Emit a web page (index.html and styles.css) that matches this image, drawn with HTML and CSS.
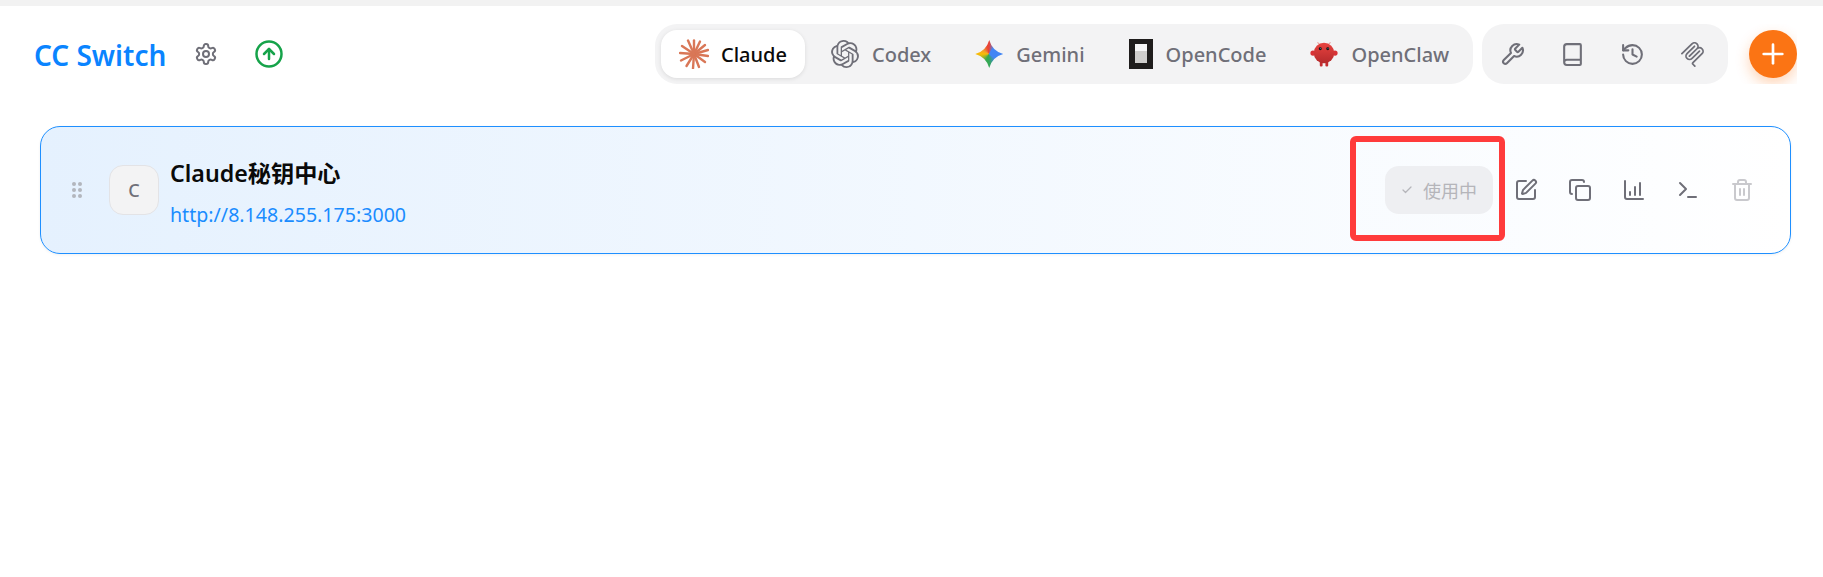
FILE: index.html
```html
<!DOCTYPE html>
<html lang="zh-CN">
<head>
<meta charset="utf-8">
<title>CC Switch</title>
<link rel="stylesheet" href="styles.css">
</head>
<body>
<div class="topstrip"></div>
<header class="header">
  <div class="brand">
    <h1 class="logo">CC Switch</h1>
    <button class="icon-btn gear" aria-label="设置">
      <svg class="ic ic-24" viewBox="0 0 24 24"><path d="M12.22 2h-.44a2 2 0 0 0-2 2v.18a2 2 0 0 1-1 1.73l-.43.25a2 2 0 0 1-2 0l-.15-.08a2 2 0 0 0-2.73.73l-.22.38a2 2 0 0 0 .73 2.73l.15.1a2 2 0 0 1 1 1.72v.51a2 2 0 0 1-1 1.74l-.15.09a2 2 0 0 0-.73 2.73l.22.38a2 2 0 0 0 2.73.73l.15-.08a2 2 0 0 1 2 0l.43.25a2 2 0 0 1 1 1.73V20a2 2 0 0 0 2 2h.44a2 2 0 0 0 2-2v-.18a2 2 0 0 1 1-1.73l.43-.25a2 2 0 0 1 2 0l.15.08a2 2 0 0 0 2.73-.73l.22-.39a2 2 0 0 0-.73-2.73l-.15-.08a2 2 0 0 1-1-1.74v-.5a2 2 0 0 1 1-1.74l.15-.09a2 2 0 0 0 .73-2.73l-.22-.38a2 2 0 0 0-2.73-.73l-.15.08a2 2 0 0 1-2 0l-.43-.25a2 2 0 0 1-1-1.73V4a2 2 0 0 0-2-2z"/><circle cx="12" cy="12" r="3"/></svg>
    </button>
    <button class="icon-btn update" aria-label="更新">
      <svg class="ic ic-30" viewBox="0 0 24 24"><circle cx="12" cy="12" r="10"/><path d="m16 12-4-4-4 4"/><path d="M12 16V8"/></svg>
    </button>
  </div>
  <div class="controls">
    <nav class="pill switcher">
      <button class="tab active">
        <svg class="app-ic claude-ic" viewBox="0 0 30 30"><g class="rays"><path d="M15 15 15 1.500"/><path d="M15 15 21 2.500"/><path d="M15 15 26 6"/><path d="M15 15 29 11"/><path d="M15 15 29 17"/><path d="M15 15 26 23"/><path d="M15 15 20 28"/><path d="M15 15 14 29.500"/><path d="M15 15 7.500 27"/><path d="M15 15 2 21.500"/><path d="M15 15 1 14"/><path d="M15 15 3 7"/><path d="M15 15 9 1.500"/></g></svg>
        <span>Claude</span>
      </button>
      <button class="tab">
        <svg class="app-ic" viewBox="0 0 24 24"><path class="openai" d="M22.2819 9.8211a5.9847 5.9847 0 0 0-.5157-4.9108 6.0462 6.0462 0 0 0-6.5098-2.9A6.0651 6.0651 0 0 0 4.9807 4.1818a5.9847 5.9847 0 0 0-3.9977 2.9 6.0462 6.0462 0 0 0 .7427 7.0966 5.98 5.98 0 0 0 .511 4.9107 6.051 6.051 0 0 0 6.5146 2.9001A5.9847 5.9847 0 0 0 13.2599 24a6.0557 6.0557 0 0 0 5.7718-4.2058 5.9894 5.9894 0 0 0 3.9977-2.9001 6.0557 6.0557 0 0 0-.7475-7.0729zm-9.022 12.6081a4.4755 4.4755 0 0 1-2.8764-1.0408l.1419-.0804 4.7783-2.7582a.7948.7948 0 0 0 .3927-.6813v-6.7369l2.02 1.1686a.071.071 0 0 1 .038.052v5.5826a4.504 4.504 0 0 1-4.4945 4.4944zm-9.6607-4.1254a4.4708 4.4708 0 0 1-.5346-3.0137l.142.0852 4.783 2.7582a.7712.7712 0 0 0 .7806 0l5.8428-3.3685v2.3324a.0804.0804 0 0 1-.0332.0615L9.74 19.9502a4.4992 4.4992 0 0 1-6.1408-1.6464zM2.3408 7.8956a4.485 4.485 0 0 1 2.3655-1.9728V11.6a.7664.7664 0 0 0 .3879.6765l5.8144 3.3543-2.0201 1.1685a.0757.0757 0 0 1-.071 0l-4.8303-2.7865A4.504 4.504 0 0 1 2.3408 7.872zm16.5963 3.8558L13.1038 8.364 15.1192 7.2a.0757.0757 0 0 1 .071 0l4.8303 2.7913a4.4944 4.4944 0 0 1-.6765 8.1042v-5.6772a.79.79 0 0 0-.407-.667zm2.0107-3.0231l-.142-.0852-4.7735-2.7818a.7759.7759 0 0 0-.7854 0L9.409 9.2297V6.8974a.0662.0662 0 0 1 .0284-.0615l4.8303-2.7866a4.4992 4.4992 0 0 1 6.6802 4.66zM8.3065 12.863l-2.02-1.1638a.0804.0804 0 0 1-.038-.0567V6.0742a4.4992 4.4992 0 0 1 7.3757-3.4537l-.142.0805L8.704 5.459a.7948.7948 0 0 0-.3927.6813zm1.0976-2.3654l2.602-1.4998 2.6069 1.4998v2.9994l-2.5974 1.4997-2.6067-1.4997Z"/></svg>
        <span>Codex</span>
      </button>
      <button class="tab">
        <span class="gemini"></span>
        <span>Gemini</span>
      </button>
      <button class="tab">
        <span class="opencode"><span class="opencode-inner"></span></span>
        <span>OpenCode</span>
      </button>
      <button class="tab">
        <svg class="app-ic" viewBox="0 0 30 30"><defs><linearGradient id="claw" x1="0" y1="0" x2="0" y2="1"><stop offset="0" stop-color="#e8433f"/><stop offset="1" stop-color="#b52a2c"/></linearGradient></defs><path class="antenna" d="M10.500 5 8 2.500M19.500 5 22 2.500"/><ellipse cx="3.200" cy="14" rx="2.800" ry="2.800" fill="#d93236"/><ellipse cx="26.800" cy="14" rx="2.800" ry="2.800" fill="#d93236"/><rect x="10.500" y="23" width="3" height="5.500" rx="1.200" fill="#c42d30"/><rect x="16.500" y="23" width="3" height="5.500" rx="1.200" fill="#c42d30"/><circle cx="15" cy="14" r="11" fill="url(#claw)"/><circle cx="11" cy="9.500" r="1.600" fill="#101418"/><circle cx="19" cy="9.500" r="1.600" fill="#101418"/><circle cx="11.300" cy="9" r=".5" fill="#7fe0e0"/><circle cx="19.300" cy="9" r=".5" fill="#7fe0e0"/></svg>
        <span>OpenClaw</span>
      </button>
    </nav>
    <div class="pill tools">
      <button class="tool" aria-label="工具"><svg class="ic ic-24" viewBox="0 0 24 24"><path d="M14.700 6.300a1 1 0 0 0 0 1.400l1.600 1.600a1 1 0 0 0 1.400 0l3.770-3.770a6 6 0 0 1-7.940 7.940l-6.910 6.910a2.120 2.120 0 0 1-3-3l6.910-6.910a6 6 0 0 1 7.940-7.940l-3.760 3.760z"/></svg></button>
      <button class="tool" aria-label="文档"><svg class="ic ic-24" viewBox="0 0 24 24"><path d="M4 19.500v-15A2.500 2.500 0 0 1 6.500 2H19a1 1 0 0 1 1 1v18a1 1 0 0 1-1 1H6.500a1 1 0 0 1 0-5H20"/></svg></button>
      <button class="tool" aria-label="历史"><svg class="ic ic-24" viewBox="0 0 24 24"><path d="M3 12a9 9 0 1 0 9-9 9.750 9.750 0 0 0-6.740 2.740L3 8"/><path d="M3 3v5h5"/><path d="M12 7v5l4 2"/></svg></button>
      <button class="tool" aria-label="MCP"><svg class="ic-fill ic-24" viewBox="0 0 24 24"><path d="M15.688 2.343a2.588 2.588 0 00-3.61 0l-9.626 9.44a.863.863 0 01-1.203 0 .823.823 0 010-1.18l9.626-9.44a4.313 4.313 0 016.016 0 4.116 4.116 0 011.204 3.54 4.3 4.3 0 013.609 1.18l.05.05a4.115 4.115 0 010 5.9l-8.706 8.537a.274.274 0 000 .393l1.788 1.754a.823.823 0 010 1.18.863.863 0 01-1.203 0l-1.788-1.753a1.92 1.92 0 010-2.754l8.706-8.538a2.47 2.47 0 000-3.54l-.05-.049a2.588 2.588 0 00-3.607-.003l-7.172 7.034-.002.002-.098.097a.863.863 0 01-1.204 0 .823.823 0 010-1.18l7.273-7.133a2.47 2.47 0 00-.003-3.537z"/><path d="M14.485 4.703a.823.823 0 000-1.18.863.863 0 00-1.204 0l-7.119 6.982a4.115 4.115 0 000 5.9 4.314 4.314 0 006.016 0l7.12-6.982a.823.823 0 000-1.18.863.863 0 00-1.204 0l-7.119 6.982a2.588 2.588 0 01-3.61 0 2.47 2.47 0 010-3.54l7.12-6.982z"/></svg></button>
    </div>
    <button class="add" aria-label="添加"><svg class="ic ic-28" viewBox="0 0 24 24"><path d="M5 12h14"/><path d="M12 5v14"/></svg></button>
  </div>
</header>
<main class="content">
  <article class="card">
    <span class="drag"><svg viewBox="0 0 12 18" class="drag-ic"><circle cx="3" cy="3" r="2"/><circle cx="9" cy="3" r="2"/><circle cx="3" cy="9" r="2"/><circle cx="9" cy="9" r="2"/><circle cx="3" cy="15" r="2"/><circle cx="9" cy="15" r="2"/></svg></span>
    <div class="avatar">C</div>
    <div class="info">
      <div class="name">Claude秘钥中心</div>
      <a class="url">http://8.148.255.175:3000</a>
    </div>
    <div class="actions">
      <button class="status"><svg class="check" viewBox="0 0 24 24"><path d="M20 6 9 17l-5-5"/></svg><span>使用中</span></button>
      <button class="act" aria-label="编辑"><svg class="ic ic-24" viewBox="0 0 24 24"><path d="M12 3H5a2 2 0 0 0-2 2v14a2 2 0 0 0 2 2h14a2 2 0 0 0 2-2v-7"/><path d="M18.375 2.625a1 1 0 0 1 3 3l-9.013 9.014a2 2 0 0 1-.853.505l-2.873.84a.5.5 0 0 1-.62-.62l.84-2.873a2 2 0 0 1 .506-.852z"/></svg></button>
      <button class="act" aria-label="复制"><svg class="ic ic-24" viewBox="0 0 24 24"><rect x="8" y="8" width="14" height="14" rx="2" ry="2"/><path d="M4 16c-1.100 0-2-.9-2-2V4c0-1.100.9-2 2-2h10c1.100 0 2 .9 2 2"/></svg></button>
      <button class="act" aria-label="统计"><svg class="ic ic-24" viewBox="0 0 24 24"><path d="M3 3v16a2 2 0 0 0 2 2h16"/><path d="M8 17v-3"/><path d="M13 17V9"/><path d="M18 17V5"/></svg></button>
      <button class="act" aria-label="终端"><svg class="ic ic-24" viewBox="0 0 24 24"><path d="M4 17l6-6-6-6"/><path d="M12 19h8"/></svg></button>
      <button class="act muted" aria-label="删除"><svg class="ic ic-24" viewBox="0 0 24 24"><path d="M3 6h18"/><path d="M19 6v14c0 1-1 2-2 2H7c-1 0-2-1-2-2V6"/><path d="M8 6V4c0-1 1-2 2-2h4c1 0 2 1 2 2v2"/><path d="M10 11v6"/><path d="M14 11v6"/></svg></button>
    </div>
    <div class="highlight"></div>
  </article>
</main>
</body>
</html>
```
FILE: styles.css
```css
* { box-sizing: border-box; }
html, body { margin: 0; padding: 0; }
body {
  background: #fff;
  width: 1823px;
  height: 577px;
  overflow: hidden;
  font-family: "Noto Sans", "Noto Sans CJK SC", sans-serif;
}
button {
  border: 0;
  background: none;
  padding: 0;
  margin: 0;
  font: inherit;
  display: flex;
  align-items: center;
  justify-content: center;
}
.topstrip { height: 6px; background: #f2f2f2; }

.header {
  display: flex;
  align-items: center;
  justify-content: space-between;
  padding: 18px 26px 0 34px;
}
.brand { display: flex; align-items: center; }
.logo {
  margin: 2px 0 0;
  font-size: 28px;
  line-height: 58px;
  font-weight: 600;
  color: #0a84ff;
}
.icon-btn { width: 40px; height: 40px; }
.gear { margin-left: 20px; color: #6f6f78; }
.update { margin-left: 23px; color: #16a34a; }

.ic { fill: none; stroke: currentColor; stroke-width: 2; stroke-linecap: round; stroke-linejoin: round; display: block; }
.ic-fill { fill: currentColor; display: block; }
.ic-24 { width: 24px; height: 24px; }
.ic-28 { width: 32px; height: 32px; }
.ic-30 { width: 30px; height: 30px; }

.controls {
  display: flex;
  height: 60px;
  overflow: hidden;
  align-items: center;
}
.pill {
  display: flex;
  align-items: center;
  height: 60px;
  background: #f3f3f4;
  border-radius: 22px;
}
.switcher { padding: 0 6px; width: 818px; gap: 8px; margin-right: 9px; }
.tab {
  height: 48px;
  padding: 0 18px;
  gap: 13px;
  border-radius: 16px;
  font-size: 20px;
  font-weight: 500;
  color: #6f6f78;
  white-space: nowrap;
}
.tab.active {
  background: #fff;
  color: #0a0a0a;
  gap: 12px;
  box-shadow: 0 1px 4px rgba(0, 0, 0, 0.1);
}
.app-ic { width: 28px; height: 28px; display: block; color: #6f6f78; flex: none; }
.claude-ic { width: 30px; height: 30px; }
.rays path { stroke: #d97757; stroke-width: 2.400; stroke-linecap: round; fill: none; }
.openai { fill: currentColor; }
.antenna { stroke: #e9a09d; stroke-width: 1.200; fill: none; }
.gemini {
  width: 28px;
  height: 28px;
  display: block;
  flex: none;
  background: conic-gradient(from 0deg, #ea4335 0deg, #4285f4 35deg, #4285f4 125deg, #34a853 180deg, #34a853 205deg, #fbbc04 270deg, #f3a02a 300deg, #ea4335 350deg);
  clip-path: path("M14 0Q17 11 28 14Q17 17 14 28Q11 17 0 14Q11 11 14 0Z");
}
.opencode {
  width: 24px;
  height: 30px;
  padding: 5px 6px 6px;
  background: #1f1d1c;
  display: block;
  flex: none;
}
.opencode-inner {
  display: block;
  height: 100%;
  background: linear-gradient(#f6f6f6 0 35%, #cfcecc 35% 100%);
}

.tools { padding: 0 6px; width: 246px; gap: 12px; }
.tool { width: 48px; height: 48px; color: #6f6f78; flex: none; }
.tool .ic-24 { width: 25px; height: 25px; }
.add {
  width: 48px;
  height: 48px;
  margin-left: 21px;
  border-radius: 50%;
  background: #fb7414;
  color: #fff;
  box-shadow: 0 6px 14px rgba(251, 116, 20, 0.3);
}

.content { padding: 42px 32px 0 40px; }
.card {
  position: relative;
  display: flex;
  align-items: center;
  height: 128px;
  border: 1px solid #1e8fff;
  border-radius: 20px;
  background: linear-gradient(90deg, #e5f1fe 0%, #ffffff 100%);
  box-shadow: 0 1px 3px rgba(0, 0, 0, 0.06);
  padding: 0 21px 0 30px;
}
.drag { width: 12px; height: 18px; margin-right: 26px; display: block; flex: none; }
.drag-ic { display: block; width: 12px; height: 18px; fill: #b3b6bd; }
.avatar {
  width: 50px;
  height: 50px;
  border-radius: 14px;
  background: #f3f3f4;
  border: 1px solid #e3e3e6;
  color: #6f6f78;
  font-size: 18px;
  font-weight: 500;
  display: flex;
  align-items: center;
  justify-content: center;
  flex: none;
}
.info { margin-left: 11px; padding-top: 4px; display: flex; flex-direction: column; gap: 13px; }
.name { font-size: 23.2px; line-height: 32px; font-weight: 600; color: #0a0a0a; }
.url { font-size: 19.6px; line-height: 26px; color: #1a8cff; }

.actions { margin-left: auto; display: flex; align-items: center; }
.status {
  width: 108px;
  height: 48px;
  border-radius: 14px;
  background: #eeeff2;
  color: #b5b5ba;
  font-size: 18px;
  gap: 10px;
  margin-right: 6px;
}
.check { width: 12px; height: 12px; fill: none; stroke: #b5b5ba; stroke-width: 2.500; stroke-linecap: round; stroke-linejoin: round; }
.act { width: 54px; height: 48px; color: #6f6f78; }
.act.muted { color: #c9c9cd; }

.highlight {
  position: absolute;
  left: 1309px;
  top: 9px;
  width: 155px;
  height: 105px;
  border: 6px solid #ff3b3b;
  border-radius: 6px;
  pointer-events: none;
}
```
